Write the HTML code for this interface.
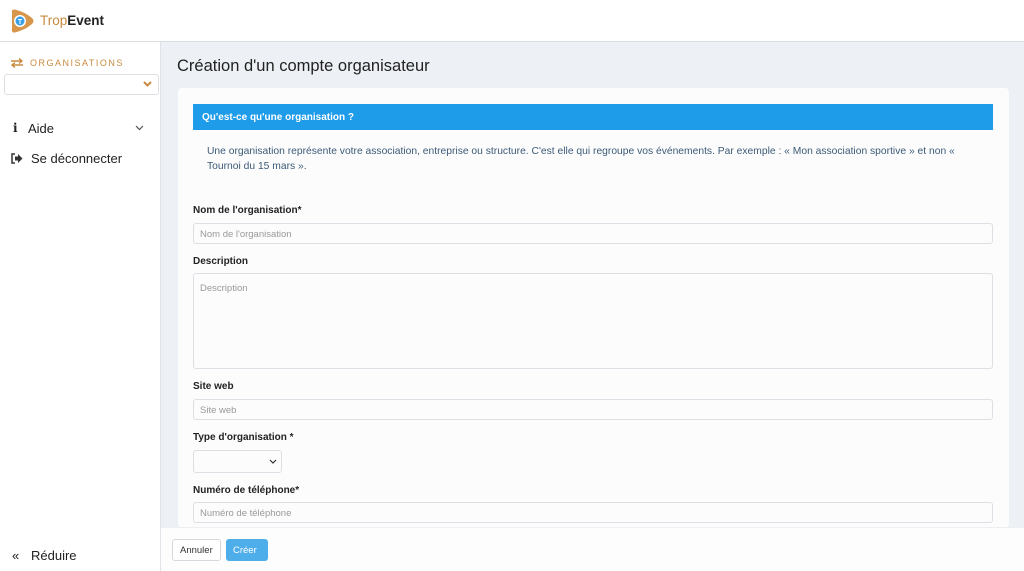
<!DOCTYPE html>
<html><head><meta charset="utf-8"><style>
*{box-sizing:border-box;margin:0;padding:0}
body{width:1024px;height:571px;overflow:hidden;font-family:"Liberation Sans",sans-serif;background:#edf1f5;position:relative;color:#333}
.hdr{position:absolute;left:0;top:0;width:1024px;height:42px;background:#fff;border-bottom:1px solid #d9dde2}
.logo{position:absolute;left:40px;top:13px;font-size:13.5px;color:#c98a3d}
.logo b{color:#222}
.side{position:absolute;left:0;top:42px;width:161px;height:529px;background:#fff;border-right:1px solid #e0e4e8}
.org{position:absolute;left:30px;top:58px;font-size:9px;letter-spacing:1.5px;color:#c98a3d}
.sel{position:absolute;left:4px;top:74px;width:155px;height:21px;border:1px solid #dcdfe3;border-radius:3px;background:#fff}
.nav{position:absolute;font-size:13px;color:#222}
.main h1{position:absolute;left:177px;top:57px;font-size:16.5px;font-weight:normal;color:#222}
.card{position:absolute;left:178px;top:88px;width:831px;height:440px;background:#fcfcfc;border-radius:4px}
.blue{position:absolute;left:193px;top:104px;width:800px;height:26px;background:#1e9be9;color:#fff;font-size:10px;font-weight:bold;padding:8px 9px}
.info{position:absolute;left:207px;top:144px;width:780px;font-size:10.3px;line-height:15px;color:#3c5a78}
.lbl{position:absolute;left:193px;font-size:10px;font-weight:bold;color:#222}
.in{position:absolute;left:193px;width:800px;height:21px;border:1px solid #dcdfe3;border-radius:3px;background:#fcfcfc;font-size:9.5px;color:#999;padding:5px 6px}
.foot{position:absolute;left:161px;top:527px;width:863px;height:44px;background:#fdfdfd;border-top:1px solid #eceef0}
.btn{position:absolute;top:539px;height:22px;font-size:9.5px;border-radius:3px;padding:5px 7px;line-height:11px}
</style></head><body>
<div class="hdr">
<svg style="position:absolute;left:9px;top:8px" width="26" height="26" viewBox="0 0 26 26"><path d="M3 5 Q2 1 6 1.5 Q16 4 23 10 Q26 13 23 16 Q16 22 6 24.5 Q2 25 3 21 Z" fill="#d8964a"/><circle cx="11" cy="13" r="6" fill="#fff"/><circle cx="11" cy="13" r="4.5" fill="#3aa0e6"/><text x="11" y="15.8" font-size="7" fill="#fff" text-anchor="middle" font-family="Liberation Sans" font-weight="bold">T</text></svg>
<div class="logo">Trop<b>Event</b></div></div>
<div class="side"></div>
<svg style="position:absolute;left:10px;top:58px" width="14" height="10" viewBox="0 0 14 10"><path d="M1 3h11M9 0.5l3 2.5-3 2.5M13 7H2M5 4.5L2 7l3 2.5" stroke="#c98a3d" stroke-width="1.4" fill="none"/></svg>
<div class="org">ORGANISATIONS</div>
<div class="sel"><svg style="position:absolute;right:6px;top:6px" width="9" height="7" viewBox="0 0 9 7"><path d="M1 1l3.5 3.5L8 1" stroke="#c98a3d" stroke-width="2" fill="none"/></svg></div>
<div class="nav" style="left:13px;top:121px;font-weight:bold;font-family:'DejaVu Serif',serif;font-size:12px">i</div>
<div class="nav" style="left:28px;top:121px">Aide</div>
<svg style="position:absolute;left:135px;top:125px" width="9" height="6" viewBox="0 0 9 6"><path d="M1 1l3.5 3.5L8 1" stroke="#555" stroke-width="1.2" fill="none"/></svg>
<svg style="position:absolute;left:10px;top:153px" width="13" height="11" viewBox="0 0 13 11"><path d="M5 1H2v9h3" stroke="#333" stroke-width="1.5" fill="none"/><path d="M5 3.5h3V1l4.5 4.5L8 10V7.5H5z" fill="#333"/></svg>
<div class="nav" style="left:31px;top:151px">Se déconnecter</div>
<div class="nav" style="left:12px;top:548px">«</div>
<div class="nav" style="left:31px;top:548px">Réduire</div>
<div class="main"><h1>Création d'un compte organisateur</h1></div>
<div class="card"></div>
<div class="blue">Qu'est-ce qu'une organisation ?</div>
<div class="info">Une organisation représente votre association, entreprise ou structure. C'est elle qui regroupe vos événements. Par exemple : « Mon association sportive » et non «<br>Tournoi du 15 mars ».</div>
<div class="lbl" style="top:205px">Nom de l'organisation*</div>
<div class="in" style="top:223px">Nom de l'organisation</div>
<div class="lbl" style="top:256px">Description</div>
<div class="in" style="top:273px;height:96px;padding-top:9px">Description</div>
<div class="lbl" style="top:381px">Site web</div>
<div class="in" style="top:399px">Site web</div>
<div class="lbl" style="top:432px">Type d'organisation *</div>
<div class="in" style="top:450px;width:89px;height:23px"><svg style="position:absolute;right:4px;top:8px" width="8" height="5" viewBox="0 0 8 5"><path d="M1 1l3 3 3-3" stroke="#333" stroke-width="1.2" fill="none"/></svg></div>
<div class="lbl" style="top:485px">Numéro de téléphone*</div>
<div class="in" style="top:502px">Numéro de téléphone</div>
<div class="foot"></div>
<div class="btn" style="left:172px;border:1px solid #d5d8dc;background:#fff;color:#333">Annuler</div>
<div class="btn" style="left:226px;background:#4eaeea;color:#fff;width:42px;padding-top:6px">Créer</div>
</body></html>
